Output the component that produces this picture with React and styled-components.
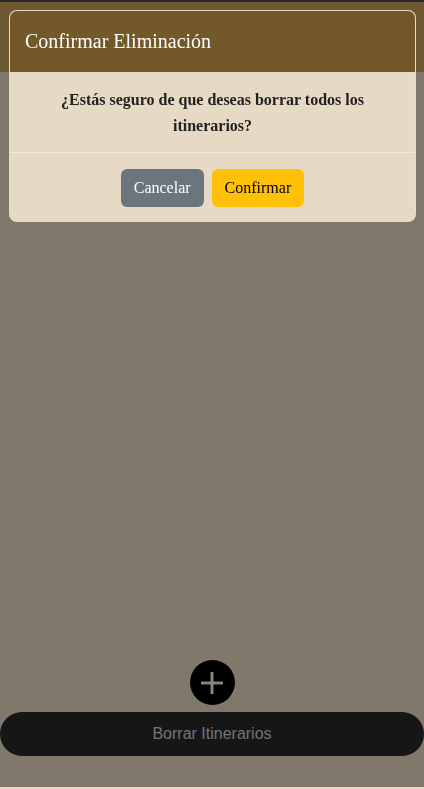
import React from "react";
import styled, { createGlobalStyle } from "styled-components";

const GlobalStyle = createGlobalStyle`
  html, body {
    margin: 0;
    padding: 0;
    background: #e7dbc4;
  }
  * {
    box-sizing: border-box;
  }
`;

const Page = styled.div`
  min-height: 100vh;
  display: flex;
  flex-direction: column;
  background: #e7dbc4;
`;

const Navbar = styled.header`
  height: 72px;
  border-top: 2px solid #4e4e4e;
  background: #c9a45c;
`;

const Main = styled.main`
  flex: 1;
`;

const BottomBar = styled.div`
  display: flex;
  flex-direction: column;
  align-items: center;
  gap: 7px;
  padding-bottom: 33px;
`;

const AddButton = styled.button`
  width: 45px;
  height: 45px;
  border-radius: 50%;
  border: none;
  padding: 0;
  background: #000;
  display: flex;
  align-items: center;
  justify-content: center;
  cursor: pointer;
`;

const DeleteAllButton = styled.button`
  width: 100%;
  height: 44px;
  border: none;
  border-radius: 22px;
  background: #282828;
  color: #c9d6dd;
  font-family: "Liberation Sans", Arial, sans-serif;
  font-size: 16px;
  cursor: pointer;
`;

const Backdrop = styled.div`
  position: fixed;
  top: 0;
  left: 0;
  right: 0;
  bottom: 2px;
  background: rgba(0, 0, 0, 0.45);
  display: flex;
  flex-direction: column;
  align-items: stretch;
  padding: 10px 8px 0 9px;
`;

const Modal = styled.div`
  background: #e6dac4;
  border-radius: 8px;
  border: 1px solid rgba(255, 255, 255, 0.1);
  overflow: hidden;
  font-family: "Liberation Serif", "Times New Roman", serif;
`;

const ModalHeader = styled.div`
  height: 61px;
  display: flex;
  align-items: center;
  padding: 0 15px;
  background: #735829;
`;

const ModalTitle = styled.h5`
  margin: 0;
  color: #fff;
  font-size: 20px;
  font-weight: normal;
`;

const ModalBody = styled.div`
  padding: 15px 20px 13px;
  text-align: center;
  color: #222;
  font-size: 16px;
  font-weight: bold;
  line-height: 26px;
`;

const ModalFooter = styled.div`
  border-top: 1px solid #efeae2;
  display: flex;
  justify-content: center;
  gap: 8px;
  padding: 16px 0 14px;
`;

const ActionButton = styled.button`
  height: 38px;
  padding: 0 13px;
  border: none;
  border-radius: 6px;
  font-family: "Liberation Serif", "Times New Roman", serif;
  font-size: 16px;
  background: ${(p) => (p.$primary ? "#ffc107" : "#6c757d")};
  color: ${(p) => (p.$primary ? "#000" : "#fff")};
  cursor: pointer;
`;

function PlusIcon() {
  return (
    <svg width="26" height="26" viewBox="0 0 26 26">
      <path
        d="M13 2v22M2 13h22"
        stroke="#f5f3e4"
        strokeWidth="3"
        fill="none"
      />
    </svg>
  );
}

export default function App() {
  return (
    <>
      <GlobalStyle />
      <Page>
        <Navbar />
        <Main />
        <BottomBar>
          <AddButton aria-label="Agregar">
            <PlusIcon />
          </AddButton>
          <DeleteAllButton>Borrar Itinerarios</DeleteAllButton>
        </BottomBar>
      </Page>
      <Backdrop>
        <Modal>
          <ModalHeader>
            <ModalTitle>Confirmar Eliminación</ModalTitle>
          </ModalHeader>
          <ModalBody>
            ¿Estás seguro de que deseas borrar todos los itinerarios?
          </ModalBody>
          <ModalFooter>
            <ActionButton>Cancelar</ActionButton>
            <ActionButton $primary>Confirmar</ActionButton>
          </ModalFooter>
        </Modal>
      </Backdrop>
    </>
  );
}
